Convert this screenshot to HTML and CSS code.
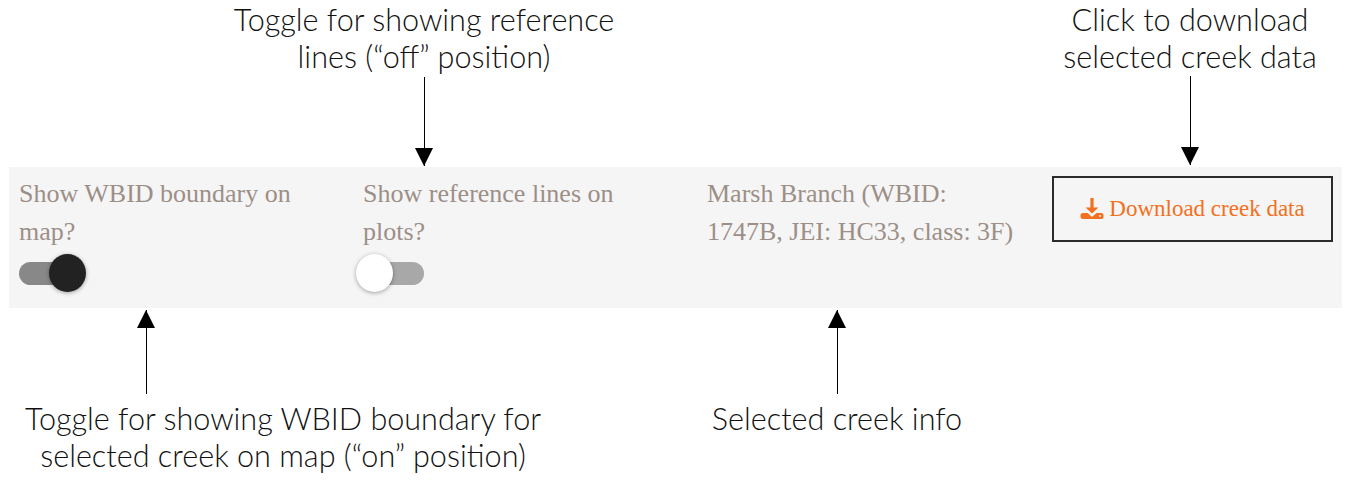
FILE: index.html
```html
<!DOCTYPE html>
<html lang="en">
<head>
    <meta charset="UTF-8">
    <title>Creek panel callouts</title>
    <link rel="stylesheet" href="styles.css">
</head>
<body>
    <div class="canvas">
        <div class="panel">
            <div class="col">
                <p class="label">Show WBID boundary on map?</p>
                <span class="toggle on"><span class="knob"></span></span>
            </div>
            <div class="col">
                <p class="label">Show reference lines on plots?</p>
                <span class="toggle"><span class="knob"></span></span>
            </div>
            <div class="col">
                <p class="label">Marsh Branch (WBID: 1747B, JEI: HC33, class: 3F)</p>
            </div>
            <a class="download" href="#">
                <svg class="icon" viewBox="0 0 24 24" width="24" height="24">
                    <path d="M10.4 1h3.2v9.4h4.8L12 16.6 5.6 10.4h4.8z"/>
                    <path d="M3 16h4.6l4.4 4 4.4-4H21a2.5 2.5 0 0 1 2.5 2.5v1A2.5 2.5 0 0 1 21 22H3a2.5 2.5 0 0 1-2.5-2.5v-1A2.5 2.5 0 0 1 3 16z"/>
                    <circle cx="20" cy="19" r="1" fill="#f5f5f5"/>
                </svg>
                Download creek data
            </a>
        </div>

        <!-- callouts -->
        <p class="note note-lines">Toggle for showing reference<br>lines (“off” position)</p>
        <p class="note note-download">Click to download<br>selected creek data</p>
        <p class="note note-wbid">Toggle for showing WBID boundary for<br>selected creek on map (“on” position)</p>
        <p class="note note-info">Selected creek info</p>

        <div class="arrow down arrow-lines"></div>
        <div class="arrow down arrow-download"></div>
        <div class="arrow up arrow-wbid"></div>
        <div class="arrow up arrow-info"></div>
    </div>
</body>
</html>
```

FILE: styles.css
```css
body {
    margin: 0;
    background-color: #fff;
}

.canvas {
    position: relative;
    height: 484px;
    overflow: hidden;
    padding-top: 167px;
    box-sizing: border-box;
}

.panel {
    display: flex;
    margin: 0 12px 0 9px;
    height: 141px;
    padding: 9px 9px 0 10px;
    box-sizing: border-box;
    background-color: #f5f5f5;
    font-family: "Liberation Serif", serif;
    font-size: 26px;
}

.col {
    width: 344px;
    flex: none;
}

.col:nth-child(3) {
    width: 345px;
}

.label {
    margin: 0;
    width: 310px;
    line-height: 38px;
    margin-top: -1px;
    color: #9c8f88;
}

.toggle {
    position: relative;
    display: block;
    width: 61px;
    height: 23px;
    margin-top: 11px;
    border-radius: 12px;
    background-color: #a8a8a8;
}

.toggle.on {
    background-color: #888;
}

.knob {
    position: absolute;
    top: -8px;
    left: -7px;
    width: 37px;
    height: 38px;
    border-radius: 50%;
    background-color: #fff;
    box-shadow: 0 1px 4px rgba(0, 0, 0, 0.35);
}

.toggle.on .knob {
    left: 30px;
    background-color: #222;
}

.download {
    display: flex;
    align-items: center;
    justify-content: center;
    gap: 5px;
    width: 282px;
    height: 66px;
    box-sizing: border-box;
    border: 2px solid #2b2b2b;
    color: #f37021;
    font-size: 23px;
    text-decoration: none;
}

.icon {
    fill: #f37021;
}

.note {
    position: absolute;
    margin: 0;
    font-family: Lato, sans-serif;
    font-weight: 300;
    font-size: 30.6px;
    line-height: 37px;
    text-align: center;
    color: #111;
    white-space: nowrap;
    transform: translateX(-50%);
}

.note-lines { left: 424px; top: 1px; }
.note-download { left: 1190px; top: 1px; }
.note-wbid { left: 283px; top: 400px; }
.note-info { left: 837px; top: 400px; }

.arrow {
    position: absolute;
    width: 1px;
    background-color: #000;
}

.arrow::after {
    content: "";
    position: absolute;
    left: -9px;
    border-left: 9.5px solid transparent;
    border-right: 9.5px solid transparent;
}

.arrow.down::after {
    bottom: 0;
    border-top: 18px solid #000;
}

.arrow.up::after {
    top: 0;
    border-bottom: 18px solid #000;
}

.arrow-lines { left: 424px; top: 77px; height: 89px; }
.arrow-download { left: 1190px; top: 76px; height: 89px; }
.arrow-wbid { left: 146px; top: 310px; height: 84px; }
.arrow-info { left: 837px; top: 310px; height: 84px; }
```
